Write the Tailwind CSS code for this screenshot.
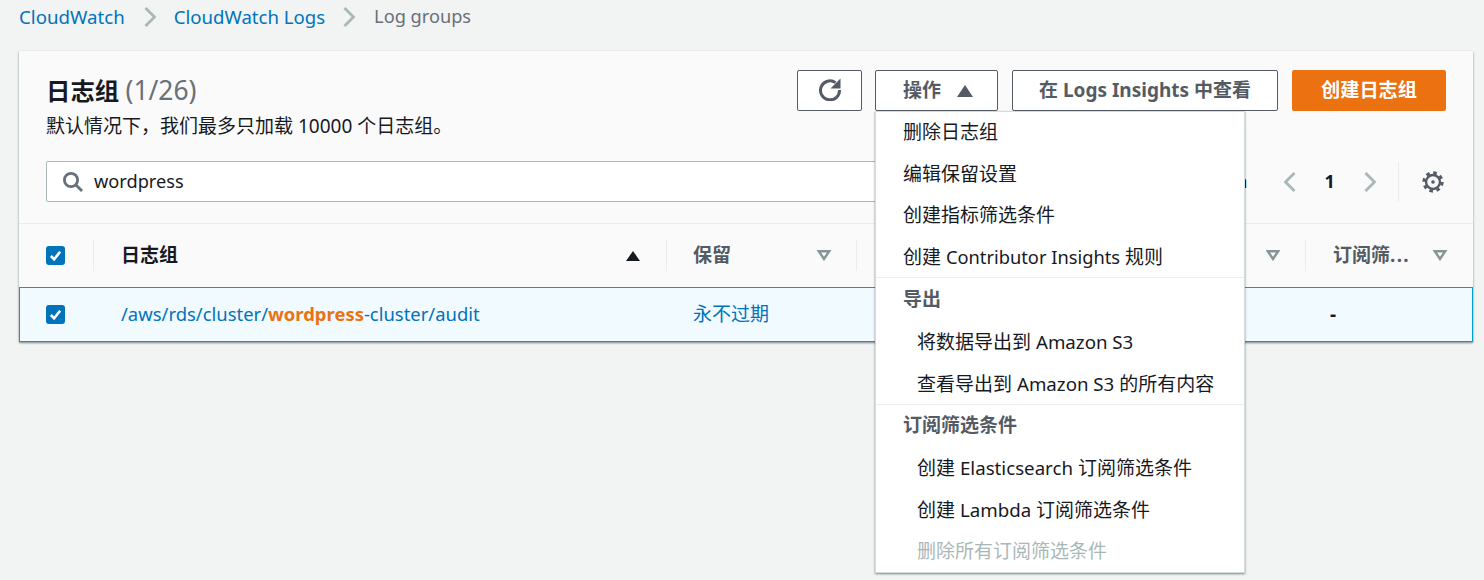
<!DOCTYPE html>
<html lang="zh">
<head>
  <meta charset="UTF-8" />
  <title>Log groups</title>
  <script src="https://cdn.jsdelivr.net/npm/@tailwindcss/browser@4"></script>
</head>
<body class="bg-[#f2f3f3] text-[#16191f] text-[19px] overflow-hidden font-['Noto_Sans','Noto_Sans_CJK_SC',sans-serif]">
  <div class="relative w-[1484px] h-[580px] overflow-hidden">

    <!-- Breadcrumb -->
    <nav class="h-[51px] pl-[19px] pb-[17px] flex items-center text-[18.7px] whitespace-nowrap">
      <a class="text-[#0073bb]">CloudWatch</a>
      <svg class="w-[12px] h-[20px] ml-[19px] mr-[18px]" viewBox="0 0 12 20" fill="none" stroke="#aab7b8" stroke-width="2.8"><path d="M1.5 1l9 9-9 9"/></svg>
      <a class="text-[#0073bb] text-[18.6px]">CloudWatch Logs</a>
      <svg class="w-[12px] h-[20px] ml-[18px] mr-[19px]" viewBox="0 0 12 20" fill="none" stroke="#aab7b8" stroke-width="2.8"><path d="M1.5 1l9 9-9 9"/></svg>
      <span class="text-[#687078] text-[18.2px]">Log groups</span>
    </nav>

    <!-- Card -->
    <section class="ml-[19px] w-[1454px] h-[291px] bg-white shadow-[0_1px_2px_rgba(0,28,36,0.5)]">
      <div class="h-[173px] bg-[#fafafa] border-b border-[#eaeded] pl-[27px] pr-[27px] pt-[19px]">
        <div class="flex justify-between">
          <div>
            <h1 class="text-[24.4px] leading-[40px] font-bold">日志组 <span class="font-normal text-[#687078] text-[26.4px]">(1/26)</span></h1>
            <p class="leading-[30px]">默认情况下，我们最多只加载 10000 个日志组。</p>
          </div>
          <div class="flex gap-[14px] items-start">
            <button class="w-[65px] h-[41px] bg-white border border-[#545b64] rounded-[2px] flex items-center justify-center">
              <svg class="w-[24px] h-[24px] -mt-[3px]" viewBox="0 0 24 24" fill="none" stroke="#545b64" stroke-width="3"><path d="M17.5 5.6A9.5 9.5 0 1 0 21.5 13"/><path d="M22.5 1.5v10h-10z" fill="#545b64" stroke="none"/></svg>
            </button>
            <button class="w-[123px] h-[41px] bg-white border border-[#545b64] rounded-[2px] font-bold text-[#545b64] flex items-center pl-[27px] -ml-[1px]">
              操作
              <svg class="w-[16px] h-[12px] ml-[16px]" viewBox="0 0 16 12" fill="#545b64"><path d="M8 0l8 12H0z"/></svg>
            </button>
            <button class="w-[266px] h-[41px] bg-white border border-[#545b64] rounded-[2px] font-bold text-[#545b64]">在 Logs Insights 中查看</button>
            <button class="w-[154px] h-[41px] bg-[#ec7211] rounded-[2px] font-bold text-white text-[19.2px]">创建日志组</button>
          </div>
        </div>
        <div class="mt-[20px] flex items-center">
          <div class="w-[1199px] h-[41px] shrink-0 bg-white border border-[#aab7b8] rounded-[2px] flex items-center pl-[15px]">
            <svg class="w-[22px] h-[22px]" viewBox="0 0 22 22" fill="none" stroke="#687078" stroke-width="2.8"><circle cx="9" cy="9" r="6.6"/><path d="M14 14l6 6"/></svg>
            <span class="ml-[10px] text-[18.2px]">wordpress</span>
          </div>
          <span class="text-[18.7px] -ml-[9px]">n</span>
          <svg class="w-[12px] h-[20px] ml-[36px]" viewBox="0 0 12 20" fill="none" stroke="#aab7b8" stroke-width="2.8"><path d="M10.5 1l-9 9 9 9"/></svg>
          <span class="w-[68px] text-center font-bold text-[18px]">1</span>
          <svg class="w-[12px] h-[20px]" viewBox="0 0 12 20" fill="none" stroke="#aab7b8" stroke-width="2.8"><path d="M1.5 1l9 9-9 9"/></svg>
          <span class="w-px h-[40px] bg-[#eaeded] ml-[22px]"></span>
          <svg class="w-[22px] h-[22px] ml-[23px]" viewBox="0 0 24 24" fill="none" stroke="#545b64"><circle cx="12" cy="12" r="7.6" stroke-width="2.6"/><circle cx="12" cy="12" r="10" stroke-width="3.2" stroke-dasharray="3.85 4"/><circle cx="12" cy="12" r="2" fill="#545b64" stroke="none"/></svg>
        </div>
      </div>

      <!-- Table header -->
      <div class="h-[63px] bg-[#fafafa] flex items-center font-bold">
        <div class="w-[75px] flex items-center h-[31px] border-r border-[#eaeded] pl-[27px]">
          <span class="w-[19px] h-[19px] rounded-[3px] bg-[#0073bb] flex items-center justify-center">
            <svg class="w-[13px] h-[13px]" viewBox="0 0 14 14" fill="none" stroke="white" stroke-width="2.8"><path d="M2 7.5l3.5 3.5L12 3"/></svg>
          </span>
        </div>
        <div class="w-[573px] flex items-center justify-between h-[31px] border-r border-[#eaeded] pl-[27px] pr-[26px]">
          <span>日志组</span>
          <svg class="w-[14px] h-[10px]" viewBox="0 0 14 10" fill="#16191f"><path d="M7 0l7 10H0z"/></svg>
        </div>
        <div class="w-[190px] flex items-center justify-between h-[31px] border-r border-[#eaeded] pl-[26px] pr-[25px] text-[#545b64]">
          <span>保留</span>
          <svg class="w-[14px] h-[11px]" viewBox="0 0 14 11" fill="none" stroke="#879596" stroke-width="2.4"><path d="M1.8 1.2h10.4L7 9z"/></svg>
        </div>
        <div class="w-[449px] flex items-center justify-end h-[31px] border-r border-[#eaeded] pr-[25px] text-[#545b64]">
          <svg class="w-[14px] h-[11px]" viewBox="0 0 14 11" fill="none" stroke="#879596" stroke-width="2.4"><path d="M1.8 1.2h10.4L7 9z"/></svg>
        </div>
        <div class="flex-1 flex items-center justify-between h-[31px] pl-[27px] pr-[26px] text-[#545b64]">
          <span>订阅筛<span class="tracking-[1.3px]">...</span></span>
          <svg class="w-[14px] h-[11px]" viewBox="0 0 14 11" fill="none" stroke="#879596" stroke-width="2.4"><path d="M1.8 1.2h10.4L7 9z"/></svg>
        </div>
      </div>

      <!-- Selected row -->
      <div class="h-[55px] bg-[#f1faff] border border-[#00a1c9] flex items-center">
        <div class="w-[74px] pl-[26px] shrink-0">
          <span class="w-[19px] h-[19px] rounded-[3px] bg-[#0073bb] flex items-center justify-center">
            <svg class="w-[13px] h-[13px]" viewBox="0 0 14 14" fill="none" stroke="white" stroke-width="2.8"><path d="M2 7.5l3.5 3.5L12 3"/></svg>
          </span>
        </div>
        <div class="w-[572px] shrink-0 pl-[27px] pb-[2px] text-[#0073bb] text-[18.45px]">/aws/rds/cluster/<span class="font-bold text-[#ec7211]">wordpress</span>-cluster/audit</div>
        <div class="w-[639px] shrink-0 pl-[27px] text-[#0073bb]">永不过期</div>
        <div class="pl-[25px] font-bold">-</div>
      </div>
    </section>

    <!-- Actions menu -->
    <div class="absolute left-[875px] top-[111px] w-[370px] h-[462px] bg-white border border-[#d5dbdb] shadow-[0_1px_2px_rgba(0,28,36,0.5)]">
      <ul class="h-[165px]">
        <li class="h-[41.7px] leading-[40px] pl-[27px]">删除日志组</li>
        <li class="h-[41.7px] leading-[40px] pl-[27px]">编辑保留设置</li>
        <li class="h-[41.7px] leading-[40px] pl-[27px]">创建指标筛选条件</li>
        <li class="h-[41.7px] leading-[40px] pl-[27px]">创建 <span class="text-[18.3px]">Contributor Insights</span> 规则</li>
      </ul>
      <div class="h-[127px] border-t border-[#eaeded]">
        <div class="h-[43px] leading-[43px] pl-[27px] font-bold text-[#545b64]">导出</div>
        <div class="h-[42px] leading-[42px] pl-[41px]">将数据导出到 <span class="text-[18.7px]">Amazon S3</span></div>
        <div class="h-[42px] leading-[42px] pl-[41px]">查看导出到 <span class="text-[18.7px]">Amazon S3</span> 的所有内容</div>
      </div>
      <div class="border-t border-[#eaeded]">
        <div class="h-[42px] leading-[41px] pl-[27px] font-bold text-[#545b64]">订阅筛选条件</div>
        <div class="h-[42px] leading-[42px] pl-[41px]">创建 <span class="text-[18.7px]">Elasticsearch</span> 订阅筛选条件</div>
        <div class="h-[42px] leading-[42px] pl-[41px]">创建 <span class="text-[18.7px]">Lambda</span> 订阅筛选条件</div>
        <div class="h-[41px] leading-[40px] pl-[41px] text-[#aab7b8]">删除所有订阅筛选条件</div>
      </div>
    </div>
  </div>
</body>
</html>
